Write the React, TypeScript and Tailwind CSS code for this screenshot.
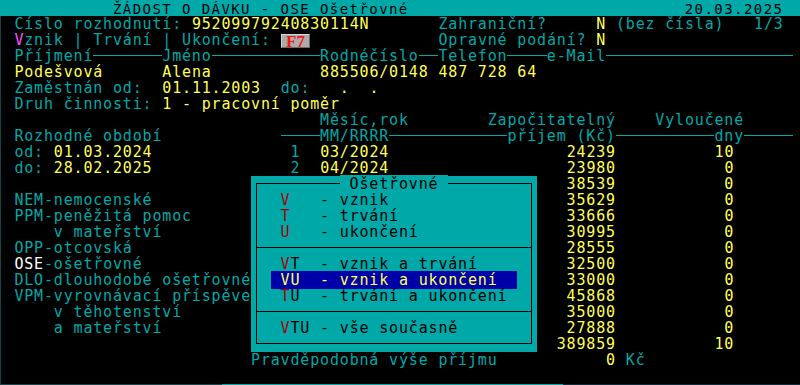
import { Fragment, type ReactNode } from 'react'

const CW = 9.86 // width of one text cell

const K = {
  t: 'text-[#00a8a8]',
  y: 'text-[#ffff55]',
  m: 'text-[#ff55ff]',
  w: 'text-[#ffffff]',
  k: 'text-black',
  r: 'text-[#a80000]',
}

type Seg = {
  c: number
  t?: string
  k?: keyof typeof K
  node?: ReactNode
  w?: number
  ln?: number
  bg?: string
}

const s = (c: number, t: string, k: keyof typeof K = 't'): Seg => ({ c, t, k })
// right aligned number ending at column `end`
const r = (end: number, t: string, k: keyof typeof K = 'y'): Seg => ({ c: end - t.length + 1, t, k })
// horizontal rule over n cells
const hr = (c: number, n: number): Seg => ({ c, ln: n })

function Line({ segs }: { segs: Seg[] }) {
  const out: ReactNode[] = []
  let cur = 0
  segs.forEach((seg, i) => {
    if (seg.c > cur) out.push(<span key={'sp' + i}>{' '.repeat(seg.c - cur)}</span>)
    if (seg.ln) {
      out.push(
        <span
          key={i}
          className="inline-block align-top h-[8px] border-b border-[#00a8a8]"
          style={{ width: seg.ln * CW }}
        />
      )
      cur = seg.c + seg.ln
    } else if (seg.node) {
      out.push(<Fragment key={i}>{seg.node}</Fragment>)
      cur = seg.c + (seg.w ?? 0)
    } else {
      const t = seg.t ?? ''
      out.push(
        <span key={i} className={`${K[seg.k ?? 't']} ${seg.bg ?? ''}`}>
          {t}
        </span>
      )
      cur = seg.c + [...t].length
    }
  })
  return <div className="h-4 whitespace-pre">{out}</div>
}

const F7 = (
  <span className="inline-flex items-center justify-center align-top mt-[2px] w-[29.6px] h-[14px] bg-[#ababab] border border-t-[#d4d4d4] border-l-[#d4d4d4] border-r-[#6c6c6c] border-b-[#6c6c6c] font-['Liberation_Serif',serif] font-bold text-[17px] leading-none tracking-normal text-[#f01818]">
    F7
  </span>
)

const title: Seg[] = [s(11, 'ŽÁDOST O DÁVKU - OSE Ošetřovné', 'k'), s(69, '20.03.2025', 'k')]

const rows: Seg[][] = [
  [s(1, 'Číslo rozhodnutí:'), s(19, '95209979240830114N', 'y'), s(44, 'Zahraniční?'), s(60, 'N', 'y'), s(62, '(bez čísla)'), s(76, '1/3')],
  [s(1, 'V', 'm'), s(2, 'znik | Trvání | Ukončení:'), { c: 28, node: F7, w: 3 }, s(44, 'Opravné podání?'), s(60, 'N', 'y')],
  [
    s(1, 'Příjmení'), hr(9, 7), s(16, 'Jméno'), hr(21, 11), s(32, 'Rodnéčíslo'), hr(42, 2),
    s(44, 'Telefon'), hr(51, 4), s(55, 'e-Mail'), hr(61, 19),
  ],
  [s(1, 'Podešvová', 'y'), s(16, 'Alena', 'y'), s(32, '885506/0148', 'y'), s(44, '487 728 64', 'y')],
  [s(1, 'Zaměstnán od:'), s(16, '01.11.2003', 'y'), s(28, 'do:'), s(32, '  .  .', 'y')],
  [s(1, 'Druh činnosti:'), s(16, '1 - pracovní poměr', 'y')],
  [s(32, 'Měsíc,rok'), s(49, 'Započitatelný'), s(66, 'Vyloučené')],
  [
    s(1, 'Rozhodné období'), hr(28, 4), s(32, 'MM/RRRR'), hr(39, 12), s(51, 'příjem (Kč)'),
    hr(62, 10), s(72, 'dny'), hr(75, 5),
  ],
  [s(1, 'od:'), s(5, '01.03.2024', 'y'), s(29, '1'), s(32, '03/2024', 'y'), r(61, '24239'), r(73, '10')],
  [s(1, 'do:'), s(5, '28.02.2025', 'y'), s(29, '2'), s(32, '04/2024', 'y'), r(61, '23980'), r(73, '0')],
  [r(61, '38539'), r(73, '0')],
  [s(1, 'NEM-nemocenské'), r(61, '35629'), r(73, '0')],
  [s(1, 'PPM-peněžitá pomoc'), r(61, '33666'), r(73, '0')],
  [s(5, 'v mateřství'), r(61, '30995'), r(73, '0')],
  [s(1, 'OPP-otcovská'), r(61, '28555'), r(73, '0')],
  [s(1, 'OSE', 'w'), s(4, '-ošetřovné'), r(61, '32500'), r(73, '0')],
  [s(1, 'DLO-dlouhodobé ošetřovné'), r(61, '33000'), r(73, '0')],
  [s(1, 'VPM-vyrovnávací příspěvek'), r(61, '45868'), r(73, '0')],
  [s(5, 'v těhotenství'), r(61, '35000'), r(73, '0')],
  [s(5, 'a mateřství'), r(61, '27888'), r(73, '0')],
  [r(61, '389859'), r(73, '10')],
  [s(25, 'Pravděpodobná výše příjmu'), s(61, '0', 'y'), s(63, 'Kč')],
  [],
]

// popup menu items, 29 cells wide, framed by a css border
const item = (hot: string, rest: string): Seg[] => [s(3, hot, 'r'), s(3 + hot.length, rest, 'k')]

type MenuRow = Seg[] | 'sep'

const menu: MenuRow[] = [
  [{ c: 9, t: ' Ošetřovné ', k: 'k', bg: 'bg-[#00a8a8]' }],
  item('V', '   - vznik'),
  item('T', '   - trvání'),
  item('U', '   - ukončení'),
  'sep',
  item('V', 'T  - vznik a trvání'),
  [{ c: 2, t: ' VU  - vznik a ukončení  ', k: 'y', bg: 'bg-[#0000a8]' }],
  item('T', 'U  - trvání a ukončení'),
  'sep',
  item('V', 'TU - vše současně'),
  [],
]

export default function App() {
  return (
    <div className="relative w-[800px] h-[385px] overflow-hidden bg-black font-['DejaVu_Sans_Mono','Liberation_Mono',monospace] text-[15px] tracking-[0.83px] leading-4">
      {/* title bar */}
      <div className="h-4 bg-[#00a8a8] pl-[4.5px] text-[14px] tracking-[1.43px]">
        <div className="translate-y-[1px]">
          <Line segs={title} />
        </div>
      </div>

      {/* form body */}
      <div className="h-[368px] border-l border-[#16444a] pl-[3.5px]">
        {rows.map((row, i) => (
          <Line key={i} segs={row} />
        ))}
      </div>

      {/* top edge of status bar */}
      <div className="flex h-px">
        <div className="w-[222px] bg-[#16444a]" />
        <div className="w-[341px] bg-[#00a8a8]" />
        <div className="flex-1 bg-[#0c2a3a]" />
      </div>

      {/* selection popup */}
      <div className="absolute left-[251px] top-[176px] w-[286px] h-[176px] bg-[#00a8a8]">
        <div className="absolute left-[5px] right-[5px] top-[7px] bottom-[8px] border border-black" />
        <div className="relative">
          {menu.map((row, i) =>
            row === 'sep' ? (
              <div key={i} className="h-4 px-[5px]">
                <div className="h-[8px] border-b border-black" />
              </div>
            ) : (
              <Line key={i} segs={row} />
            )
          )}
        </div>
      </div>
    </div>
  )
}
